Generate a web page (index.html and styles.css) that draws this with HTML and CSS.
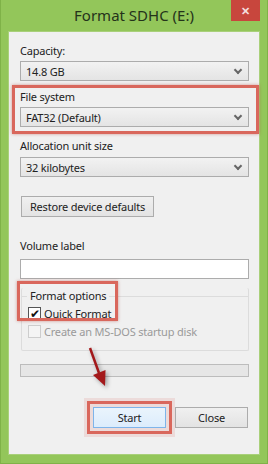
FILE: index.html
```html
<!DOCTYPE html>
<html lang="en">
<head>
    <meta charset="UTF-8">
    <title>Format SDHC (E:)</title>
    <link rel="stylesheet" href="styles.css">
</head>
<body>
    <div class="window">
        <div class="titlebar">
            <span class="title">Format SDHC (E:)</span>
            <div class="close-x">&#x2715;</div>
        </div>
        <div class="content">
            <div class="label">Capacity:</div>
            <div class="select"><span>14.8 GB</span><i class="chev"></i></div>

            <div class="mark mark-fs">
                <div class="label">File system</div>
                <div class="select"><span>FAT32 (Default)</span><i class="chev"></i></div>
            </div>

            <div class="label gap">Allocation unit size</div>
            <div class="select"><span>32 kilobytes</span><i class="chev"></i></div>

            <button class="btn restore">Restore device defaults</button>

            <div class="label vol">Volume label</div>
            <div class="textbox"></div>

            <div class="group">
                <div class="legend">Format options</div>
                <label class="check"><span class="box checked">&#x2714;</span>Quick Format</label>
                <label class="check disabled"><span class="box"></span>Create an MS-DOS startup disk</label>
                <div class="mark mark-opts"></div>
            </div>

            <div class="progress"></div>

            <div class="actions">
                <button class="btn start">Start</button>
                <button class="btn">Close</button>
            </div>

            <svg class="arrow" width="30" height="46" viewBox="0 0 30 46">
                <line x1="3" y1="2" x2="12" y2="27" stroke="#a3191b" stroke-width="2.5"/>
                <polygon points="6,29 18.5,24 18,40" fill="#a3191b"/>
            </svg>
        </div>
    </div>
</body>
</html>
```

FILE: styles.css
```css
body {
    margin: 0;
    background: #8fc456;
    font-family: "Noto Sans", "Open Sans", Arial, sans-serif;
    font-size: 11px;
    letter-spacing: -0.2px;
    color: #222;
}
.window {
    width: 268px;
    height: 464px;
    box-sizing: border-box;
    display: flex;
    flex-direction: column;
    background: #93c65a;
    border-left: 1px solid #7fb248;
    border-right: 1px solid #7fb248;
    border-bottom: 1px solid #7fb248;
}
.titlebar {
    height: 31px;
    flex: none;
    position: relative;
    display: flex;
    justify-content: center;
    align-items: center;
}
.title {
    font-size: 15px;
    letter-spacing: 0;
    color: #24331a;
    margin-top: -1px;
}
.close-x {
    position: absolute;
    top: 0;
    right: 7px;
    width: 29px;
    height: 21px;
    background: #c8463d;
    color: #f4dcdc;
    font-size: 11px;
    font-weight: bold;
    display: flex;
    align-items: center;
    justify-content: center;
}
.content {
    flex: 1;
    margin: 0 7px 8px 7px;
    background: #f0f0f0;
    border: 1px solid #a9d07a;
    padding: 11px 10px 0 11px;
    position: relative;
}
.label {
    height: 16px;
    line-height: 16px;
    margin-bottom: 2px;
}
.select {
    height: 18px;
    border: 1px solid #acacac;
    background: linear-gradient(#f2f2f2, #e4e4e4);
    display: flex;
    align-items: center;
    padding-left: 5px;
    justify-content: space-between;
}
.chev {
    width: 4px;
    height: 4px;
    border-right: 2px solid #666;
    border-bottom: 2px solid #666;
    transform: rotate(45deg);
    margin: -3px 7px 0 0;
}
.mark {
    position: relative;
}
.mark::after {
    content: "";
    position: absolute;
    border: 3px solid #d9675c;
    box-shadow: 0 0 3px rgba(180, 60, 50, 0.5);
}
.mark-fs {
    margin-top: 8px;
}
.mark-fs::after {
    left: -8px;
    right: -10px;
    top: -4px;
    bottom: -7px;
}
.gap {
    margin-top: 11px;
    margin-bottom: 3px;
}
.btn {
    font: inherit;
    letter-spacing: inherit;
    color: #222;
    height: 21px;
    border: 1px solid #acacac;
    background: linear-gradient(#f0f0f0, #e3e3e3);
    padding: 0 8px;
    white-space: nowrap;
}
.restore {
    display: block;
    margin-top: 19px;
    margin-left: 1px;
    width: 133px;
    padding: 0;
}
.vol {
    margin-top: 21px;
    margin-bottom: 5px;
}
.textbox {
    height: 18px;
    border: 1px solid #acacac;
    background: #fff;
}
.group {
    margin: 9px 0 0 1px;
    padding: 0 0 10px 6px;
    border: 1px solid #dcdcdc;
    border-top: none;
    border-radius: 2px;
    position: relative;
}
.group::before {
    content: "";
    position: absolute;
    top: 8px;
    left: -1px;
    right: -1px;
    border-top: 1px solid #dcdcdc;
}
.legend {
    position: relative;
    z-index: 1;
    display: inline-block;
    background: #f0f0f0;
    padding: 0 3px;
    margin-left: -1px;
    line-height: 16px;
}
.check {
    display: flex;
    align-items: center;
    height: 18px;
}
.box {
    width: 11px;
    height: 11px;
    border: 1px solid #555;
    background: #fff;
    margin-right: 3px;
    font-size: 12px;
    line-height: 11px;
    text-align: center;
    color: #111;
}
.disabled {
    color: #9a9a9a;
}
.disabled .box {
    border-color: #cdcdcd;
    background: #f4f4f4;
}
.mark-opts {
    position: absolute;
    left: -5px;
    top: -7px;
    width: 101px;
    height: 40px;
}
.mark-opts::after {
    inset: 0;
}
.progress {
    margin-top: 13px;
    height: 11px;
    border: 1px solid #bcbcbc;
    background: #e6e6e6;
}
.actions {
    display: flex;
    justify-content: flex-end;
    gap: 9px;
    margin-top: 30px;
    margin-right: 1px;
}
.actions .btn {
    width: 73px;
}
.start {
    background: linear-gradient(#eaf4fc, #dcecfc);
    border-color: #7eb4ea;
    outline: 3px solid #d9675c;
    outline-offset: 3px;
    box-shadow: 0 0 0 9px rgba(217, 103, 92, 0.15);
}
.arrow {
    position: absolute;
    left: 78px;
    top: 314px;
    filter: drop-shadow(2px 2px 2px rgba(0, 0, 0, 0.35));
}
```
